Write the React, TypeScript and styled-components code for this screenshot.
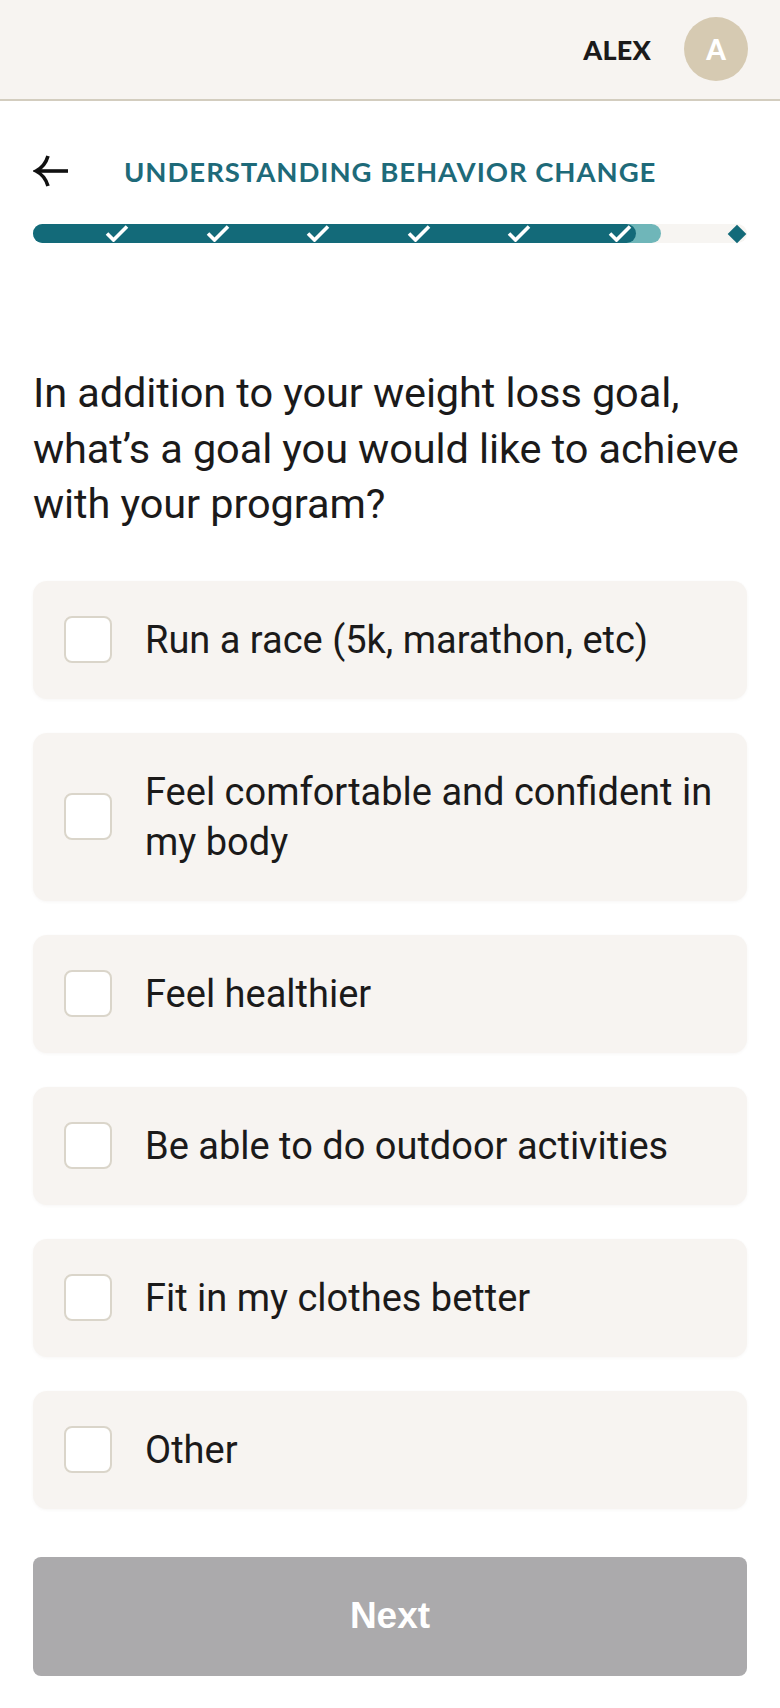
import styled, { createGlobalStyle } from "styled-components";

const GlobalStyle = createGlobalStyle`
  * {
    box-sizing: border-box;
  }
  body {
    margin: 0;
    background: #ffffff;
    font-family: Roboto, "Liberation Sans", sans-serif;
    color: #1b1a1a;
  }
`;

const Page = styled.div`
  width: 780px;
  min-height: 1708px;
  display: flex;
  flex-direction: column;
`;

const Header = styled.header`
  height: 101px;
  background: #f7f4f1;
  border-bottom: 2px solid #d3cdbf;
  display: flex;
  align-items: center;
  justify-content: flex-end;
  gap: 33px;
  padding: 0 32px 1px 0;
`;

const UserName = styled.span`
  font-family: Lato, sans-serif;
  font-weight: 900;
  font-size: 27px;
  letter-spacing: 0.2px;
  color: #1b1a1a;
`;

const Avatar = styled.div`
  width: 64px;
  height: 64px;
  border-radius: 50%;
  background: #d6cab2;
  color: #ffffff;
  display: flex;
  align-items: center;
  justify-content: center;
  font-family: Lato, sans-serif;
  font-weight: 900;
  font-size: 28px;
`;

const Main = styled.main`
  display: flex;
  flex-direction: column;
  padding: 0 33px 28px;
`;

const TitleRow = styled.div`
  display: flex;
  align-items: center;
  gap: 55px;
  height: 40px;
  margin-top: 50px;
`;

const BackButton = styled.button`
  width: 36px;
  height: 34px;
  border: none;
  background: none;
  padding: 0;
  display: flex;
  align-items: center;
  justify-content: center;
  cursor: pointer;
`;

const SectionTitle = styled.h1`
  margin: 0;
  font-family: Lato, sans-serif;
  font-weight: 700;
  font-size: 27.5px;
  letter-spacing: 0.95px;
  color: #1e6a79;
  text-transform: uppercase;
`;

const Track = styled.div`
  margin-top: 33px;
  height: 19px;
  border-radius: 10px;
  background: #f7f5f2;
  display: flex;
  align-items: center;
  justify-content: space-between;
  padding-right: 3px;
`;

const Partial = styled.div<{ $steps: number; $total: number }>`
  height: 100%;
  width: calc((100% - 10px) * ${({ $steps, $total }) => $steps / $total} + 27px);
  border-radius: 10px;
  background: #6fb6b9;
  display: flex;
`;

const Fill = styled.div`
  height: 100%;
  width: calc(100% - 25px);
  border-radius: 10px;
  background: #136a79;
  display: flex;
`;

const Step = styled.div`
  flex: 1;
  display: flex;
  align-items: center;
  justify-content: flex-end;
  padding-right: 4px;
`;

const Diamond = styled.div`
  width: 12px;
  height: 12px;
  background: #136a79;
  transform: rotate(45deg) scale(1.1);
  margin-right: 1px;
`;

const Question = styled.h2`
  margin: 122px 0 49px;
  font-weight: 400;
  font-size: 41.5px;
  line-height: 55.5px;
  letter-spacing: -0.1px;
  color: #1b1a1a;
`;

const Options = styled.div`
  display: flex;
  flex-direction: column;
  gap: 34px;
`;

const OptionCard = styled.label`
  display: flex;
  align-items: center;
  gap: 33px;
  padding: 34px 30px 34px 31px;
  background: #f7f4f1;
  border-radius: 14px;
  box-shadow: 0 1px 3px rgba(120, 100, 80, 0.06);
  cursor: pointer;
`;

const Box = styled.span`
  flex: 0 0 auto;
  width: 48px;
  height: 47px;
  border: 2px solid #dad5ca;
  border-radius: 8px;
  background: #ffffff;
`;

const OptionText = styled.span`
  font-size: 38px;
  line-height: 50px;
  color: #1b1a1a;
`;

const NextButton = styled.button`
  margin-top: 48px;
  height: 119px;
  border: none;
  border-radius: 8px;
  background: #abaaac;
  color: #ffffff;
  font-family: "Liberation Sans", Arial, sans-serif;
  font-weight: 700;
  font-size: 37px;
  cursor: not-allowed;
`;

const ArrowIcon = () => (
  <svg width="36" height="34" viewBox="0 0 36 34" fill="none">
    <path d="M3 17H35" stroke="#111" strokeWidth="3.6" strokeLinecap="butt" />
    <path
      d="M15 2C13 9 9 14 3 17C9 20 13 25 15 32"
      stroke="#111"
      strokeWidth="3.6"
      fill="none"
    />
  </svg>
);

const CheckIcon = () => (
  <svg width="24" height="17" viewBox="0 0 24 17" fill="none">
    <path
      d="M2 8.5L8.5 15L22 1.5"
      stroke="#ffffff"
      strokeWidth="3.6"
      strokeLinejoin="miter"
    />
  </svg>
);

const options = [
  "Run a race (5k, marathon, etc)",
  "Feel comfortable and confident in my body",
  "Feel healthier",
  "Be able to do outdoor activities",
  "Fit in my clothes better",
  "Other",
];

const totalSteps = 7;
const doneSteps = 6;

export default function App() {
  return (
    <>
      <GlobalStyle />
      <Page>
        <Header>
          <UserName>ALEX</UserName>
          <Avatar>A</Avatar>
        </Header>
        <Main>
          <TitleRow>
            <BackButton aria-label="Back">
              <ArrowIcon />
            </BackButton>
            <SectionTitle>Understanding Behavior Change</SectionTitle>
          </TitleRow>
          <Track>
            <Partial $steps={doneSteps} $total={totalSteps}>
              <Fill>
                {Array.from({ length: doneSteps }).map((_, i) => (
                  <Step key={i}>
                    <CheckIcon />
                  </Step>
                ))}
              </Fill>
            </Partial>
            <Diamond />
          </Track>
          <Question>
            In addition to your weight loss goal, what’s a goal you would like
            to achieve with your program?
          </Question>
          <Options>
            {options.map((text) => (
              <OptionCard key={text}>
                <Box />
                <OptionText>{text}</OptionText>
              </OptionCard>
            ))}
          </Options>
          <NextButton disabled>Next</NextButton>
        </Main>
      </Page>
    </>
  );
}
